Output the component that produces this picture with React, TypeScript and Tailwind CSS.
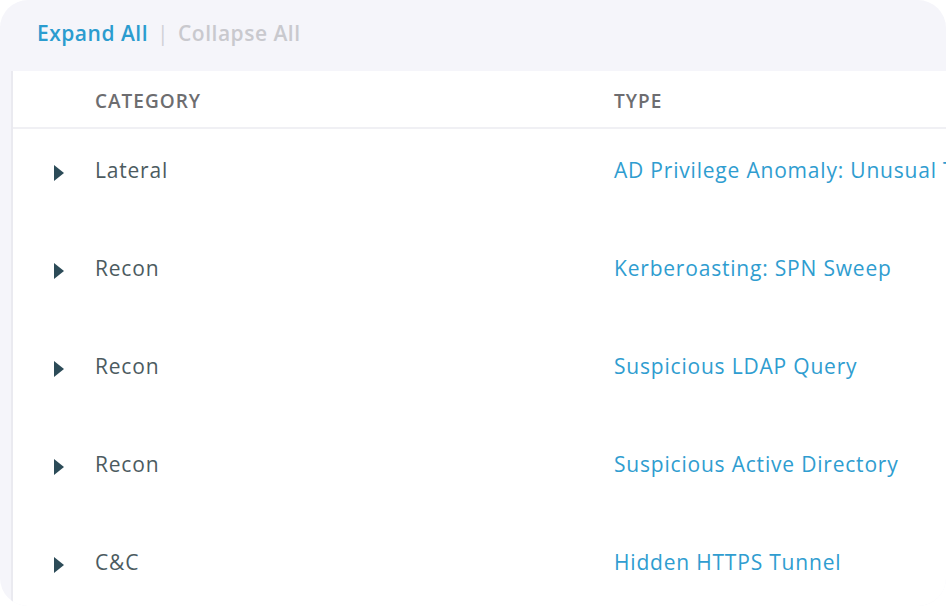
import React from "react";

const rows = [
  { cat: "Lateral", type: "AD Privilege Anomaly: Unusual Trust" },
  { cat: "Recon", type: "Kerberoasting: SPN Sweep" },
  { cat: "Recon", type: "Suspicious LDAP Query" },
  { cat: "Recon", type: "Suspicious Active Directory" },
  { cat: "C&C", type: "Hidden HTTPS Tunnel" },
];

function Tri() {
  return (
    <svg width="12" height="18" viewBox="0 0 12 18" className="block">
      <path d="M1 1 L11 9 L1 17 Z" fill="#2c4b58" />
    </svg>
  );
}

export default function App() {
  return (
    <div className="w-[946px] h-[606px] bg-white overflow-hidden" style={{ fontFamily: '"Open Sans", "Noto Sans", sans-serif' }}>
      <div className="w-full h-full rounded-[28px] bg-[#f5f5fa] overflow-hidden flex flex-col">
        <div className="h-[71px] shrink-0 flex items-center pl-[37px] pb-[3px] text-[21px] font-semibold tracking-[0.5px]">
          <span className="text-[#2b9ccf]">Expand All</span>
          <span className="mx-[9px] text-[#d0d0d6] font-normal">|</span>
          <span className="text-[#c9c9ce]">Collapse All</span>
        </div>
        <div className="flex-1 ml-[11px] bg-white border-l-2 border-[#eaeaf0] flex flex-col">
          <div className="h-[58px] shrink-0 flex items-center border-b-2 border-[#f0f0f4] text-[19px] font-semibold text-[#6d6d70] tracking-[1px] pt-[4px]">
            <div className="w-[601px] pl-[82px]">CATEGORY</div>
            <div>TYPE</div>
          </div>
          {rows.map((r, i) => (
            <div key={i} className="h-[98px] shrink-0 flex items-start pt-[28px] text-[21px] leading-[26px] font-medium whitespace-nowrap tracking-[0.8px] overflow-hidden">
              <div className="w-[82px] shrink-0 pl-[40px] pt-[7px]">
                <Tri />
              </div>
              <div className="w-[519px] shrink-0 text-[#4c5b5f]">{r.cat}</div>
              <div className="text-[#2f9dd0]">{r.type}</div>
            </div>
          ))}
        </div>
      </div>
    </div>
  );
}
